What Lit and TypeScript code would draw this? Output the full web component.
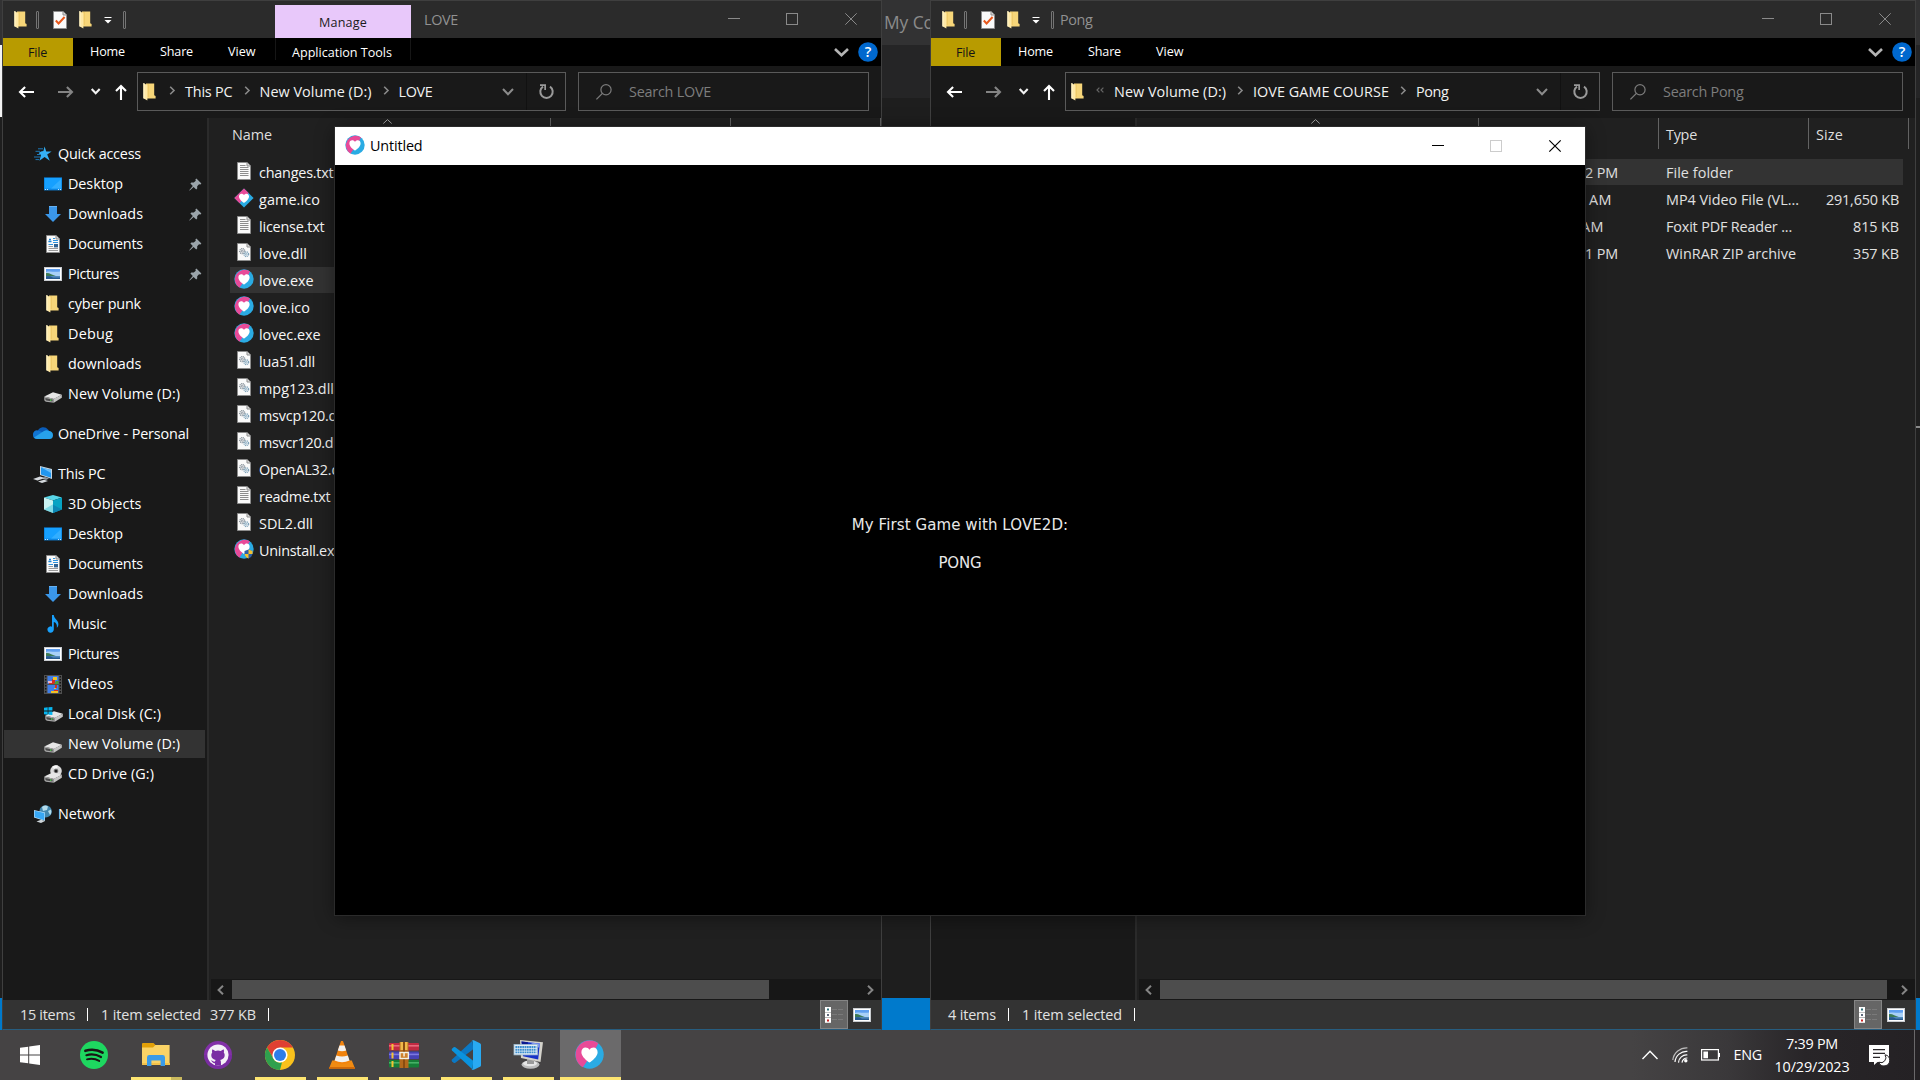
import { LitElement, html, svg, css, nothing } from "lit";
import { customElement, property } from "lit/decorators.js";

/* Text set to a known advance width by spreading the difference over its letters. */
@customElement("fit-text")
class FitText extends LitElement {
  @property() t = "";
  @property({ type: Number }) w = 0;
  static styles = css`
    :host { display: inline-block; white-space: pre; flex: none; }
  `;
  render() { return html`<span>${this.t}</span>`; }
  updated() {
    const s = this.renderRoot.querySelector("span") as HTMLElement;
    s.style.letterSpacing = "0px";
    if (!this.w) return;
    const natural = s.getBoundingClientRect().width;
    s.style.letterSpacing = `${((this.w - natural) / this.t.length).toFixed(3)}px`;
  }
}
const T = (t: string, w: number, cls = "") => html`<fit-text class=${cls} .t=${t} .w=${w}></fit-text>`;

const icon = (w: number, h: number, body: unknown, cls = "") =>
  html`<svg class="ic ${cls}" width=${w} height=${h} viewBox="0 0 ${w} ${h}">${body}</svg>`;

const heart = (cx: number, cy: number, s: number) => svg`<path fill="#fff"
  transform="translate(${cx} ${cy}) scale(${s})"
  d="M0 5.6C-1.5 4.5-5.6 1.6-5.6-1.6C-5.6-3.6-4.3-4.8-2.8-4.8C-1.6-4.8-.6-4.2 0-3.2C.6-4.2 1.6-4.8 2.8-4.8C4.3-4.8 5.6-3.6 5.6-1.6C5.6 1.6 1.5 4.5 0 5.6Z"/>`;
const loveCircle = (d: number, cls = "") => icon(d, d, svg`
  <circle cx=${d / 2} cy=${d / 2} r=${d / 2 - 0.3} fill="#2aabe3"/>
  <path fill="#e84a98" d="M${d * 0.8} ${d * 0.11}A${d / 2 - 0.2} ${d / 2 - 0.2} 0 1 0 ${d * 0.27} ${d * 0.94}L${d * 0.42} ${d * 0.72}L${d * 0.66} ${d * 0.4}Z"/>
  ${heart(d / 2, d / 2, d / 20)}`, cls);

const folder = () => icon(13, 18, svg`
  <path fill="#f7d679" d="M3 .5H11.2V12.2L12.6 13V15.4H3Z"/>
  <path fill="#e9bf5c" d="M4.5 1H6V14H4.5Z" opacity=".5"/>
  <path fill="#ffe9a6" d="M.4 0L4.4 2.2V17.6L.4 15.2Z"/>
  <path fill="#fff3c8" d="M.4 0L1.6.6V15.8L.4 15.2Z"/>`, "folder");
const page = (body: unknown) => icon(14, 18, svg`
  <path fill="#fafafa" stroke="#8c8c8c" d="M.5.5H10L13.5 4V17.5H.5Z"/>
  <path fill="#dcdcdc" stroke="#8c8c8c" d="M10 .5V4H13.5"/>${body}`);
const lines = svg`<path stroke="#8d8d8d" fill="none" d="M3 3.5H8.5M3 5.5H11.5M3 7.5H11.5M3 9.5H11.5M3 11.5H11.5M3 13.5H11.5"/>`;
const gears = svg`<g fill="none">
  <circle cx="5.3" cy="8.2" r="2.5" stroke="#7c8790" stroke-width="1.3" stroke-dasharray="1.1 .6"/>
  <circle cx="5.3" cy="8.2" r="1" stroke="#7c8790" stroke-width=".8"/>
  <circle cx="9.3" cy="11.2" r="2.3" stroke="#7fa3bb" stroke-width="1.3" stroke-dasharray="1.1 .6"/>
  <circle cx="9.3" cy="11.2" r=".9" stroke="#7fa3bb" stroke-width=".8"/></g>`;

const picture = (w = 18, h = 14) => html`<svg class="ic" width=${w} height=${h} viewBox="0 0 18 14">
  <rect width="18" height="14" fill="#c9ccd0"/><rect x="1" y="1" width="16" height="12" fill="#fff"/>
  <rect x="2" y="2" width="14" height="10" fill="#5f9ff0"/>
  <path fill="#a9d0f7" d="M2 5C6 3.5 10 5.5 16 4.5V9H2Z"/>
  <path fill="#3d7a55" d="M2 6.2C5 5.6 8 8 12.5 9.2H2Z"/>
  <path fill="#27598f" d="M2 9.2H16V12H2Z"/><path fill="#5c95c4" d="M6 9.2H16V10.4H9Z"/></svg>`;

const drive = svg`<path fill="#e6e6e6" d="M.3 6.6L9 2.2L17.8 4.8L9.8 9Z"/>
  <path fill="#a8a8a8" d="M.3 6.6L9.8 8.7V12.8L2 11.7Q.3 11.2.3 9.8Z"/>
  <path fill="#c4c4c4" d="M9.8 8.7L17.8 4.8V7.8L9.8 12.8Z"/>
  <path fill="#4a4a4a" d="M1.4 8L8.6 9.5V11.4L2.4 10.4Q1.4 10.1 1.4 9.2Z"/><circle cx="6.8" cy="10.1" r=".8" fill="#4be04b"/>`;

const ICONS: Record<string, () => unknown> = {
  folder,
  star: () => icon(18, 16, svg`
    <path fill="#35b1f5" d="M10.6.6L12.2 5.4H17.6L13.2 8.6L15.8 14.8L10.6 11L5.4 14.8L7 9L4.6 7L7 5.4L9.4 5Z"/>
    <path stroke="#1c78b8" stroke-width="1" d="M4 2.8H9M1.5 5.3H6M3 8.5H6.5M0 11H6M1.5 13.6H5"/>`),
  desktop: () => icon(18, 14, svg`<rect y=".4" width="18" height="13" fill="#0b84e0"/>
    <rect x=".8" y="1" width="16.4" height="10.6" fill="#16a0ff"/><path fill="#32aeff" d="M7 11.6L17.2 2V11.6Z"/>
    <path stroke="#bfe4ff" d="M1 12.5H2M3 12.5H4M14 12.5H15M16 12.5H17"/>`),
  down: () => icon(16, 16, svg`<path fill="#3b97ea" d="M4 0H12V8H16L8 16L0 8H4Z"/><path fill="#66b2f3" d="M4 0H12V1H4Z"/>`),
  doc: () => page(svg`<path d="M3 4.5H5M2.4 6.5H5.5" stroke="#1c86d8" stroke-width="1.6"/>
    <path d="M7 3.5H9M7 5.5H12M7 7.5H12M2.5 9.5H7" stroke="#2d93de" fill="none"/><rect x="8" y="9" width="4" height="3.4" fill="#316392"/>
    <path d="M2.5 11.5H7M2.5 13.5H12M2.5 15.5H12" stroke="#9a9a9a"/>`),
  picture: () => picture(),
  drive: () => icon(18, 11, svg`<g transform="translate(0 -1)">${drive}</g>`, "low"),
  cloud: () => icon(20, 13, svg`<path fill="#0a5cb8" d="M4.8 5A5.8 5.8 0 0 1 15 3.6L17 6L8 9Z"/>
    <path fill="#1174d2" d="M0 9A4 4 0 0 1 5.2 4.6L11 7L4 13A4 4 0 0 1 0 9Z"/>
    <path fill="#27a1ea" d="M11 5A5 5 0 0 1 16 5A4 4 0 0 1 20 9.2A3.8 3.8 0 0 1 16.5 13H4A4 4 0 0 1 1 11.6Z"/>`, "high"),
  pc: () => icon(20, 17, svg`<path fill="#c6d5e0" d="M7 0L19 3V13L7 9Z"/><path fill="#2196ee" d="M8 1.3L18 4V11.8L8 8.4Z"/>
    <path fill="#6cc0fa" d="M8 1.3L18 4V7Z"/><path fill="#8e969c" d="M12 11L16 12.5L13 14L9 12.6Z"/>
    <path fill="#d6dade" d="M0 13L7 10.6L12 12L4.5 14.4ZM5 15.6L11 13.8L15 15L9 17Z"/>`),
  cube: () => icon(18, 18, svg`<path fill="#58d6e8" d="M9 0L18 2.6L9 5.6L0 2.6Z"/><path fill="#c9f3f3" d="M0 2.6L9 5.6V18L0 14.6Z"/>
    <path fill="#07a3c4" d="M18 2.6L9 5.6V18L18 14.6Z"/><path fill="#3fc6dc" d="M0 14.6L9 9.2V18Z" opacity=".55"/><path fill="#0c87b5" d="M18 14.6L9 9.8V18Z"/>`),
  note: () => icon(12, 18, svg`<path fill="#18a0fb" d="M5 0H6.8C7 4 11.4 5 11.4 9.2C11.4 11 10.5 12.2 9.8 12.8C10.4 9 8.6 7.6 6.8 7V14.6A3.2 3.2 0 1 1 5 11.7Z"/>`),
  video: () => icon(18, 19, svg`<rect width="18" height="19" fill="#505050"/><rect x="3.5" y="1" width="11" height="8" fill="#3f7fe8"/>
    <rect x="3.5" y="10" width="11" height="8" fill="#3f7fe8"/><path fill="#d62c22" d="M8 4H11V9H5V7H8ZM11 10H13V13H11ZM10 15H14V16H10Z"/>
    <path fill="#f0c425" d="M9 2H13V5H9ZM7 16H14V18H7ZM10 13H12V14H10Z"/><path fill="#e9b4c6" d="M4 6H8V8H4Z"/><path fill="#4b9c36" d="M12 6H14.5V9H10Z"/>
    <path stroke="#161616" stroke-width="1.4" stroke-dasharray="1.5 1.5" d="M1.7 1V19M16.3 1V19"/>`),
  osdrive: () => icon(19, 15, svg`<g transform="translate(1 2)">${drive}</g><path fill="#06b6f0" d="M0 .8L3.7.3V3.6H0ZM4.4.2L8.4 0V3.6H4.4ZM0 4.4H3.7V7.7L0 7.2ZM4.4 4.4H8.4V8L4.4 7.8Z"/>`),
  cd: () => icon(18, 18, svg`<circle cx="12" cy="6" r="5.8" fill="#dadada"/><path fill="#f8f8f8" d="M12 6L8 1.8A5.8 5.8 0 0 1 14 .6Z"/>
    <circle cx="12" cy="6" r="2.4" fill="#8b8b8b"/><circle cx="12" cy="6" r="1.5" fill="#1d1d1d"/><g transform="translate(0 5)">${drive}</g>`),
  net: () => icon(18, 18, svg`<circle cx="11.6" cy="6.4" r="6.2" fill="#4288b0"/><path fill="#b4dcec" d="M8 2Q11-.5 14 1.4L13 5L9 6ZM14 6L17 4.5Q18 8 16 10Z"/>
    <path fill="#bfe3fb" d="M0 5L11 7.5V16L0 12.5Z"/><path fill="#38a8f5" d="M.6 5.8L10.4 8V15.2L.6 12Z"/><path fill="#cfd6da" d="M2.5 16.5L7 14.7L11 16L7 18Z"/>`),
  txt: () => page(lines),
  dll: () => page(gears),
  love: () => loveCircle(20),
  game: () => icon(20, 20, svg`<path fill="#2aabe3" d="M10 .4L19.6 10L10 19.6L.4 10Z" stroke-linejoin="round"/>
    <path fill="#e84a98" d="M10 .4L14.6 5L5.6 15.2L.4 10Z"/>${heart(10, 10, 0.9)}`),
  uninst: () => icon(20, 20, svg`<circle cx="10" cy="10" r="9.7" fill="#2aabe3"/>
    <path fill="#e84a98" d="M16 2.2A9.8 9.8 0 1 0 5.4 18.8L12 8Z"/>${heart(10, 9.4, 1)}
    <path fill="#2c5fa8" d="M10.5 12L14.5 10.5L18.5 12V15Q18 18 14.5 19.6Q11 18 10.5 15Z"/>
    <path fill="#f2c230" d="M14.5 10.5L18.5 12V15H14.5ZM10.6 15H14.5V19.6Q11 18 10.6 15Z"/>`),
};

type Nav = [string, string, number, number, string?];
const NAV: Nav[] = [
  ["star", "Quick access", 83, 0], ["desktop", "Desktop", 55, 1, "pin"], ["down", "Downloads", 75, 1, "pin"],
  ["doc", "Documents", 75, 1, "pin"], ["picture", "Pictures", 51, 1, "pin"], ["folder", "cyber punk", 73, 1],
  ["folder", "Debug", 45, 1], ["folder", "downloads", 73.5, 1], ["drive", "New Volume (D:)", 112, 1],
  ["cloud", "OneDrive - Personal", 131, 0, "gap"], ["pc", "This PC", 47.5, 0, "gap"], ["cube", "3D Objects", 73.5, 1],
  ["desktop", "Desktop", 55, 1], ["doc", "Documents", 75, 1], ["down", "Downloads", 75, 1], ["note", "Music", 38.5, 1],
  ["picture", "Pictures", 51, 1], ["video", "Videos", 45.5, 1], ["osdrive", "Local Disk (C:)", 93, 1],
  ["drive", "New Volume (D:)", 112, 1, "sel"], ["cd", "CD Drive (G:)", 86, 1], ["net", "Network", 57, 0, "gap"],
];
const FILES: [string, string, number][] = [
  ["txt", "changes.txt", 74.5], ["game", "game.ico", 61], ["txt", "license.txt", 65.5], ["dll", "love.dll", 48],
  ["love", "love.exe", 54.5], ["love", "love.ico", 51], ["love", "lovec.exe", 61.5], ["dll", "lua51.dll", 56],
  ["dll", "mpg123.dll", 75], ["dll", "msvcp120.dll", 85], ["dll", "msvcr120.dll", 81], ["dll", "OpenAL32.dll", 88],
  ["txt", "readme.txt", 71.5], ["dll", "SDL2.dll", 54], ["uninst", "Uninstall.exe", 83],
];
const ROWS: [string, number, number, string, number, string, number][] = [
  ["2 PM", 33, 7, "File folder", 67, "", 0],
  ["AM", 23, 13, "MP4 Video File (VL...", 133, "291,650 KB", 73],
  ["AM", 23, 21, "Foxit PDF Reader ...", 126, "815 KB", 46],
  ["1 PM", 33, 7, "WinRAR ZIP archive", 130, "357 KB", 46],
];

const captionBtns = (color: string, max = color, sw = 1) => html`
  ${icon(12, 12, svg`<path stroke=${color} d="M0 5.5H12"/>`)}
  ${icon(12, 12, svg`<rect x=".5" y=".5" width="11" height="11" fill="none" stroke=${max}/>`, "mx")}
  ${icon(12, 12, svg`<path stroke=${color} stroke-width=${sw} d="M.3.3L11.7 11.7M11.7.3L.3 11.7"/>`)}`;
const qsep = () => html`<i class="qsep"></i>`;
const crumb = () => icon(7, 9, svg`<path fill="none" stroke="#8a8a8a" stroke-width="1.6" d="M1.2.7L5 4.5L1.2 8.3"/>`, "crumb");
const pin = () => icon(13, 13, svg`<path fill="#9aa3a9" d="M7.4.6L12.4 5.4L11.4 6.4L10 6.2L8.2 8.2V10.4L7.2 11.4L4.6 9L.8 12.6L.2 12.2L3.8 8L1.4 5.6L2.4 4.6H4.8L6.8 2.8L6.4 1.6Z"/>`, "pin");
const viewIcon = () => icon(18, 16, svg`<g fill="#fff"><rect width="6" height="5"/><rect y="5.4" width="6" height="5"/><rect y="10.8" width="6" height="5"/></g>
  <path fill="#2f6f78" d="M2 1.5H4V3.5H2Z"/><path fill="#5f6a7c" d="M2 7H4V9H2Z"/><path fill="#c22" d="M2 12.4H4V14.4H2Z"/>
  <path stroke="#7a7a7a" d="M7 2.5H12M13 2.5H18M7 7.5H12M13 7.5H18M7 12.5H12M13 12.5H18"/>`);

@customElement("explorer-window")
class ExplorerWindow extends LitElement {
  @property() kind: "love" | "pong" = "love";
  static styles = css`
    :host { display: flex; flex-direction: column; box-sizing: border-box; border: 1px solid #3f3f3f; border-bottom: 1px solid #275d7f;
      background: #191919; color: #fff; font: 14.4px/20px "Open Sans", "Noto Sans", sans-serif; overflow: hidden; }
    .ic { display: block; flex: none; overflow: visible; }
    .title { height: 37px; flex: none; background: #2b2b2b; display: flex; align-items: flex-start; box-sizing: border-box; padding-left: 11px; color: #919191; }
    .quick { display: grid; grid-template-columns: 22px 17px 26px 25px 19px 3px; padding-top: 10px; align-items: center; height: 18px; }
    .qsep { display: block; width: 1px; height: 16px; border: 1px solid #757575; border-radius: 1px; }
    .manage { margin: 4px 0 0 149px; width: 136px; height: 33px; background: #e8c8fa; color: #1b1b1b; font-size: 12.6px; line-height: 35px; text-align: center; }
    .cap { margin-top: 9px; }
    .love .cap { margin-left: 13px; } .pong .cap { margin-left: 6px; }
    .btns { margin: 12px 24px 0 auto; display: flex; gap: 46px; }
    .btns .mx { margin-right: 1px; }
    .ribbon { height: 28px; flex: none; background: #000; display: flex; align-items: center; font-size: 12.6px; line-height: 30px; }
    .file { width: 70px; height: 28px; background: #b89b00; color: #141414; text-align: center; box-sizing: border-box; padding-right: 1px; }
    .tab { margin-left: 35px; } .tab.first { margin-left: 17px; }
    .tools { margin-left: 19px; width: 133px; padding-right: 1px; height: 22px; line-height: 30px; align-self: flex-start; border: solid #161616; border-width: 0 1px; text-align: center; }
    .help { margin-left: auto; margin-right: 3px; display: flex; align-items: center; gap: 9px; }
    .addr { height: 52px; flex: none; display: flex; align-items: center; box-sizing: border-box; padding: 0 12px 1px 15px; }
    .arrows { display: grid; grid-template-columns: 39px 34px 24px 22px; align-items: center; flex: none; }
    .box { height: 37px; border: 1px solid #5a5a5a; display: flex; align-items: center; flex: none; }
    .box.path { flex: 1; margin-right: 12px; padding-left: 5px; color: #f2f2f2; }
    .crumb { margin: 0 9px 2px 11px; }
    .path .ic + .crumb { margin-left: 13px; }
    .dbl { margin: 0 10px 3px 12px; }
    .drop { margin-left: auto; margin-right: 12px; }
    .refresh { border-left: 1px solid #111; height: 37px; width: 38px; display: grid; place-items: center; }
    .search { width: 289px; color: #7d7d7d; gap: 17px; }
    .search .ic { margin-left: 17px; }
    .main { flex: 1; display: flex; min-height: 0; }
    .nav { width: 204px; flex: none; padding-top: 22px; box-sizing: border-box; border-right: 2px solid #191919; display: flex; flex-direction: column; gap: 2px; }
    .row { height: 28px; flex: none; margin-left: 1px; display: flex; align-items: center; }
    .row .slot { width: 20px; display: grid; place-items: center; flex: none; margin: 0 5px 0 29px; }
    .row.sub .slot { margin-left: 39px; }
    .row .folder { margin-right: 1px; }
    .row .low { margin-top: 5px; } .row .high { margin-bottom: 3px; }
    .row.gap { margin-top: 10px; }
    .row.sel { background: #333; }
    .row fit-text { margin-top: -1px; }
    .pin { margin-left: auto; margin-right: 3px; }
    .content { flex: 1; border-left: 2px solid #2b2b2b; background: #202020; display: flex; flex-direction: column; min-width: 0; }
    .head { height: 31px; flex: none; display: flex; color: #dedede; line-height: 33px; box-sizing: border-box; }
    .head div { border-right: 1px solid #636363; box-sizing: border-box; flex: none; height: 31px; padding-left: 7px; }
    .head .name { width: 342px; padding-left: 23px; display: flex; }
    .sort { margin: 1px 0 0 111px; }
    .c2 { width: 180px; } .c3 { width: 150px; } .c4 { width: 100px; }
    .list { flex: 1; padding-top: 10px; }
    .frow { height: 26px; margin: 0 11px 1px 21px; display: flex; align-items: center; color: #f6f6f6; }
    .frow.sel, .prow.sel { background: #333; }
    .frow fit-text, .prow fit-text { position: relative; top: 1px; }
    .frow .slot { width: 20px; margin: -3px 5px 0 4px; display: grid; place-items: center; flex: none; }
    .prow { height: 26px; margin: 0 12px 1px 21px; display: flex; align-items: center; color: #e0e0e0; }
    .prow .size { margin-left: auto; margin-right: 4px; }
    .dates { display: flex; justify-content: flex-end; width: 508px; flex: none; }
    .e7 { margin-right: 48px; } .e13 { margin-right: 54px; } .e21 { margin-right: 62px; }
    .scroll { height: 21px; margin-left: 2px; background: #171717; display: flex; align-items: center; flex: none; }
    .scroll .l { margin: 0 8px 0 6px; } .scroll .r { margin: 0 7px 0 auto; }
    .thumb { height: 19px; background: #4d4d4d; }
    .love .thumb { width: 537px; } .pong .thumb { width: 727px; }
    .status { height: 29px; flex: none; background: #333; display: flex; align-items: center; color: #e2e2e2; padding-left: 17px; }
    .status i { width: 1px; height: 13px; background: #fff; margin: 0 13px 0 12px; }
    .status .kb { margin-left: 9px; }
    .views { margin-left: auto; display: flex; align-items: center; gap: 5px; margin-right: 10px; }
    .vbtn { width: 26px; height: 27px; background: #666; border: 1px solid #858585; display: grid; place-items: center; }
    .wrap { display: contents; }
  `;
  render() {
    const love = this.kind === "love";
    return html`<div class="wrap ${this.kind}">
      <div class="title">
        <div class="quick">${folder()}${qsep()}
          ${page(svg`<path fill="none" stroke="#e8581c" stroke-width="2" d="M2.8 9.5L5.6 12.5L11.6 6"/>`)}
          ${folder()}
          ${icon(8, 7, svg`<path stroke="#fff" d="M.5 .5H7.5"/><path fill="#fff" d="M.5 3H7.5L4 6.6Z"/>`)}${qsep()}</div>
        ${love ? html`<div class="manage">${T("Manage", 48)}</div>` : nothing}
        ${T(love ? "LOVE" : "Pong", love ? 34 : 32.5, "cap")}
        <div class="btns">${captionBtns("#8a8a8a")}</div>
      </div>
      <div class="ribbon">
        <div class="file">${T("File", 19)}</div>
        ${T("Home", 35, "tab first")}${T("Share", 33, "tab")}${T("View", 27.5, "tab")}
        ${love ? html`<div class="tools">${T("Application Tools", 100)}</div>` : nothing}
        <div class="help">
          ${icon(15, 9, svg`<path fill="none" stroke="#b4b4b4" stroke-width="2.6" d="M1 1L7.5 7.3L14 1"/>`)}
          <svg class="ic" width="20" height="20" viewBox="0 0 20 20"><circle cx="10" cy="10" r="9.8" fill="#0068ce"/>
            <text x="10" y="15.2" fill="#fff" font-size="14.5" font-weight="600" text-anchor="middle">?</text></svg>
        </div>
      </div>
      <div class="addr">
        <div class="arrows">
          ${icon(16, 12, svg`<path fill="none" stroke="#fff" stroke-width="2.1" d="M16 6H2M7.1 1L2 6L7.1 11"/>`)}
          ${icon(16, 12, svg`<path fill="none" stroke="#848484" stroke-width="2.1" d="M1 6H15M9.9 1L15 6L9.9 11"/>`)}
          ${icon(10, 7, svg`<path fill="none" stroke="#f2f2f2" stroke-width="2.1" d="M.7 1L4.7 5.2L8.7 1"/>`)}
          <svg class="ic" width="12" height="18" viewBox="0 0 12 14"><path fill="none" stroke="#fff" stroke-width="2.1" d="M6 15V.8M1 6L6 .9L11 6"/></svg>
        </div>
        <div class="box path">${folder()}
          ${love ? html`${crumb()}${T("This PC", 47.5)}${crumb()}${T("New Volume (D:)", 112)}${crumb()}${T("LOVE", 34)}`
            : html`${icon(8, 6, svg`<path fill="none" stroke="#666" stroke-width="1.2" d="M3.4.6L1 3L3.4 5.4M7.4.6L5 3L7.4 5.4"/>`, "dbl")}
              ${T("New Volume (D:)", 112)}${crumb()}${T("IOVE GAME COURSE", 136)}${crumb()}${T("Pong", 32.5)}`}
          ${icon(12, 8, svg`<path fill="none" stroke="#8c8c8c" stroke-width="2" d="M1 1L6 6.2L11 1"/>`, "drop")}
          <div class="refresh">${icon(15, 15, svg`<path fill="none" stroke="#9a9a9a" stroke-width="2" d="M11 2.6A6.2 6.2 0 1 1 4 2.6"/><path fill="#9a9a9a" d="M1 .2H7V6H5.3V2H1Z"/>`)}</div>
        </div>
        <div class="box search">
          ${icon(16, 16, svg`<circle cx="10" cy="5.8" r="5.1" fill="none" stroke="#7c7c7c" stroke-width="1.2"/><path stroke="#7c7c7c" stroke-width="1.3" d="M6.4 9.4L.4 15.4"/>`)}
          ${T(love ? "Search LOVE" : "Search Pong", love ? 82 : 80.5)}
        </div>
      </div>
      <div class="main">
        <div class="nav">${love ? NAV.map(([ic, t, w, sub, x]) => html`
          <div class="row ${sub ? "sub" : ""} ${x === "gap" ? "gap" : ""} ${x === "sel" ? "sel" : ""}">
            <span class="slot">${ICONS[ic]()}</span>${T(t, w)}${x === "pin" ? pin() : nothing}</div>`) : nothing}</div>
        <div class="content">
          <div class="head">
            <div class="name">${T("Name", 40)}${icon(9, 5, svg`<path fill="none" stroke="#a6a6a6" d="M.3 4.5L4.5.6L8.7 4.5"/>`, "sort")}</div>
            <div class="c2"></div><div class="c3">${love ? nothing : T("Type", 31)}</div>
            ${love ? nothing : html`<div class="c4">${T("Size", 27)}</div>`}
          </div>
          <div class="list">
            ${love ? FILES.map(([ic, t, w], i) => html`<div class="frow ${i === 4 ? "sel" : ""}"><span class="slot">${ICONS[ic]()}</span>${T(t, w)}</div>`)
              : ROWS.map(([d, dw, off, t, tw, s, sw], i) => html`<div class="prow ${i === 0 ? "sel" : ""}">
                <span class="dates">${T(d, dw, "e" + off)}</span>${T(t, tw)}${s ? T(s, sw, "size") : nothing}</div>`)}
          </div>
          <div class="scroll">
            ${icon(7, 10, svg`<path fill="none" stroke="#858585" stroke-width="2" d="M6 .8L1.6 5L6 9.2"/>`, "l")}
            <div class="thumb"></div>
            ${icon(7, 10, svg`<path fill="none" stroke="#858585" stroke-width="2" d="M1 .8L5.4 5L1 9.2"/>`, "r")}
          </div>
        </div>
      </div>
      <div class="status">
        ${love ? T("15 items", 55) : T("4 items", 48)}<i></i>${T("1 item selected", 100)}
        ${love ? T("377 KB", 46, "kb") : nothing}<i></i>
        <div class="views"><div class="vbtn">${viewIcon()}</div>${picture()}</div>
      </div>
    </div>`;
  }
}

const TASKS: { run: number; cls?: string; ic: () => unknown }[] = [
  { run: 0, ic: () => icon(20, 20, svg`<path fill="#fff" d="M0 2.8L8.2 1.7V9.5H0ZM9.2 1.5L20 0V9.5H9.2ZM0 10.5H8.2V18.3L0 17.2ZM9.2 10.5H20V20L9.2 18.5Z"/>`) },
  { run: 0, ic: () => icon(28, 28, svg`<circle cx="14" cy="14" r="14" fill="#1ed760"/>
    <path fill="none" stroke="#191414" stroke-linecap="round" stroke-width="2.6" d="M5.4 9.8C11 8.2 17.6 8.8 22.6 11.6"/>
    <path fill="none" stroke="#191414" stroke-linecap="round" stroke-width="2.2" d="M6.4 14.2C11 12.9 16.6 13.5 21 16"/>
    <path fill="none" stroke="#191414" stroke-linecap="round" stroke-width="1.9" d="M7 18.3C11 17.3 15.6 17.8 19.2 19.9"/>`) },
  { run: 2, ic: () => icon(28, 24, svg`<path fill="#e2a008" d="M0 .8Q0 0 1 0H11.5L14 2.4V5H0Z"/><path fill="#fad366" d="M0 4.6H11L13.4 2H27.6V22H0Z"/>
    <path fill="#f3c24a" d="M0 20H28V22H0Z"/><path fill="#3a9be8" d="M5 14.4Q5 12 7.4 12H20.6Q23 12 23 14.4V23H18.6V17.4H9.4V23H5Z"/>`) },
  { run: 0, ic: () => icon(28, 28, svg`<circle cx="14" cy="14" r="14" fill="#8230a8"/><path fill="#6f2a9c" d="M0 14A14 14 0 0 0 28 14Z" opacity=".5"/><circle cx="14" cy="14" r="10.6" fill="#f4f1f7"/>
    <path fill="#7a2da4" d="M8.4 8.2L11.3 9.9Q14 9.3 16.7 9.9L19.6 8.2Q20.4 10 19.8 11.6C21.6 14 20.8 18.4 16.2 19C17 20 17 21 17 24.6H11V22.2C8.4 22.7 8.4 20.4 6.8 19.6C8.8 19.2 9 21 11 20.6Q11 19.6 11.8 19C7.2 18.4 6.4 14 8.2 11.6Q7.6 10 8.4 8.2Z"/>`) },
  { run: 1, ic: () => icon(30, 30, svg`<circle cx="15" cy="15" r="15" fill="#f9c11c"/>
    <path fill="#df4032" d="M2 7.5A15 15 0 0 1 28 7.5H15L8.5 18.7Z"/><path fill="#2fa04e" d="M2 7.5L8.5 18.8A7.5 7.5 0 0 0 17 22.3L15 30A15 15 0 0 1 2 7.5Z"/>
    <circle cx="15" cy="15" r="7.6" fill="#fff"/><circle cx="15" cy="15" r="6" fill="#2f7de9"/>`) },
  { run: 1, ic: () => icon(28, 29, svg`<path fill="#f08b13" d="M4.2 20.5H23.8L27 28.4H1Z"/><path fill="#d26a08" d="M1 27H27V28.8H1Z"/>
    <path fill="#f2830c" d="M13 1H15L22 22Q14 26 6 22Z"/><path fill="#f1f1f1" d="M11.5 5.5H16.5L18.2 10.4Q14 12 9.8 10.4ZM8.3 15.4Q14 17.5 19.8 15.4L21.5 20.6Q14 24 6.6 20.6Z"/>`) },
  { run: 1, ic: () => icon(30, 26, svg`<rect y="1" width="30" height="7.5" rx="1" fill="#c22a42"/><rect y="3" width="30" height="1.6" fill="#e86a7c"/>
    <rect y="9.6" width="30" height="7.4" rx="1" fill="#4642b4"/><rect y="11.6" width="30" height="1.6" fill="#7d79e0"/>
    <rect y="18" width="30" height="7.6" rx="1" fill="#167f38"/><rect y="20" width="30" height="1.6" fill="#46b066"/>
    <path fill="#f4c233" d="M2.5 2H4.5V8H2.5ZM2.5 10.5H4.5V16.5H2.5ZM2.5 19H4.5V25H2.5Z"/>
    <rect x="10.5" width="9" height="26" fill="#b3691c"/><rect x="11.5" width="7" height="8" fill="#efb94a"/><rect x="14" width="2" height="26" fill="#8a4d10"/>
    <rect x="11" y="10.5" width="8.4" height="6" fill="#d0812c" stroke="#f1f1e4" stroke-width="1.4"/><rect x="14.3" y="10" width="1.5" height="4.5" fill="#f1f1e4"/>`) },
  { run: 1, ic: () => icon(30, 30, svg`<path fill="#0b78c4" d="M21.6.6L1 19.4Q.2 20.3 1 21.2L2.6 22.7Q3.4 23.3 4.3 22.7L22.2 9.2Z"/>
    <path fill="#0a93de" d="M21.6 29.4L1 10.6Q.2 9.7 1 8.8L2.6 7.3Q3.4 6.7 4.3 7.3L22.2 20.8Z"/>
    <path fill="#29aaf2" d="M21.4.4Q22 0 22.8.3L29 3.2Q30 3.8 30 4.8V25.2Q30 26.2 29 26.8L22.8 29.7Q21.4 30.2 20.4 29.2Q22 29.6 22 27.8V2.2Q22 .4 20.4.8Z"/>`) },
  { run: 1, ic: () => icon(29, 29, svg`<ellipse cx="16.5" cy="24.6" rx="9" ry="4.2" fill="#bcbcbc"/><ellipse cx="16" cy="23.4" rx="7" ry="2.8" fill="#e6e6e6"/><path fill="#9a9a9a" d="M13 19H20V24H13Z"/>
    <path fill="#d4d2cb" d="M6 0L29 2.2L26.5 22L7 18Z"/><path fill="#1632c8" d="M7.5 1.6L25.8 3.6L24.2 19.4L9 16.2Z"/><path fill="#0b1a8e" d="M7.5 1.6L14 2.3L13.6 4.5L8 4.4Z"/>
    <path fill="#7d96f2" d="M16 2.6L25.8 3.6L25.4 8Z"/>
    <rect y="4.5" width="23.4" height="10.4" fill="#e4eef5" stroke="#9dbbd0" stroke-width=".8"/>
    <path stroke="#3c8fd0" stroke-width="1.9" stroke-dasharray="1.8 .5" d="M1.4 7H22.4M1.4 9.7H22.4M1.4 12.4H22.4"/>`) },
  { run: 1, cls: "on", ic: () => loveCircle(29) },
];

@customElement("app-root")
class AppRoot extends LitElement {
  static styles = css`
    :host { display: block; width: 1920px; height: 1080px; position: relative; overflow: hidden; background: #1e1e1e;
      font: 14.4px/20px "Open Sans", "Noto Sans", sans-serif; color: #fff; }
    .ic { display: block; flex: none; overflow: visible; }
    .desk { height: 1030px; display: flex; flex-direction: column; }
    .vt { height: 45px; background: #323233; color: #8b8b8b; font-size: 17.4px; line-height: 44px; padding-left: 884px; }
    .vm { height: 53px; background: #252526; }
    .vb { flex: 1; }
    .vs { height: 32px; background: #007acc; }
    .edge { position: absolute; left: 0; top: 45px; width: 2px; height: 72px; background: #f3f3f3; }
    .tick { position: absolute; left: 1916px; top: 426px; width: 4px; height: 2px; background: #8a8a8a; }
    .w1 { position: absolute; left: 2px; top: 0; width: 880px; height: 1030px; }
    .w2 { position: absolute; left: 930px; top: 0; width: 986px; height: 1030px; }
    .w3 { position: absolute; left: 335px; top: 127px; width: 1250px; height: 788px; display: flex; flex-direction: column;
      box-shadow: 0 0 0 1px #2b2b2b, 0 2px 18px rgba(0,0,0,.45); background: #000; }
    .wt { height: 38px; background: #fff; color: #000; display: flex; align-items: center; padding-left: 10px; box-sizing: border-box; }
    .wt .ic.logo { margin: 0 5px 3px 0; }
    .wt .btns { margin: 0 24px 0 auto; display: flex; gap: 46px; }
    .wt .mx { margin-right: 1px; }
    .game { flex: 1; display: flex; flex-direction: column; align-items: center; color: #e8e8e8; font: 15px/20px "DejaVu Sans", sans-serif; padding-top: 350px; box-sizing: border-box; gap: 18px; }
    .task { height: 50px; display: flex; background: linear-gradient(90deg, #454344 0, #454344 85%, #3a383a 90%, #282528 94%, #242124 100%); }
    .tb { width: 51px; margin-right: 11px; height: 50px; display: grid; place-items: center; box-sizing: border-box; padding: 0 1px 1px 0; }
    .tb.first { width: 60px; margin-right: 9px; padding: 0; }
    .tb.run { box-shadow: inset 0 -3px #fde571; }
    .tb.multi { background: linear-gradient(#fde571, #fde571) 0 47px / 40px 3px no-repeat, linear-gradient(#cab95e, #cab95e) 40px 47px / 11px 3px no-repeat; }
    .tb.on { width: 61px; background: #6b6a6b; margin-left: -5px; padding-right: 2px; }
    .tray { margin-left: auto; display: flex; align-items: center; color: #fff; }
    .clock { width: 76px; margin: -1px 19px 0 12px; display: flex; flex-direction: column; align-items: center; line-height: 23px; }
    .eng { margin-left: 14px; }
    .show { width: 1px; height: 50px; background: #6a686a; margin: 0 5px 0 25px; }
    .wifi { margin-left: 14px; } .bat { margin-left: 13px; }
  `;
  render() {
    return html`
      <div class="desk">
        <div class="vt">${T("My Co", 50)}</div><div class="vm"></div><div class="vb"></div><div class="vs"></div>
      </div>
      <div class="edge"></div><div class="tick"></div>
      <explorer-window class="w1" .kind=${"love"}></explorer-window>
      <explorer-window class="w2" .kind=${"pong"}></explorer-window>
      <div class="w3">
        <div class="wt">${loveCircle(20, "logo")}${T("Untitled", 52.5)}<div class="btns">${captionBtns("#000", "#ccc", 1.2)}</div></div>
        <div class="game">${T("My First Game with LOVE2D:", 216.5)}${T("PONG", 43)}</div>
      </div>
      <div class="task">
        ${TASKS.map((t, i) => html`<div class="tb ${i === 0 ? "first" : ""} ${t.run === 1 ? "run" : ""} ${t.run === 2 ? "multi" : ""} ${t.cls ?? ""}">${t.ic()}</div>`)}
        <div class="tray">
          ${icon(16, 10, svg`<path fill="none" stroke="#fff" stroke-width="1.4" d="M.5 9L8 1.2L15.5 9"/>`)}
          ${icon(16, 16, svg`<g fill="none" stroke="#fff" stroke-width="1.2"><path d="M.8 13A14 14 0 0 1 15.4.8" opacity=".65"/><path d="M3 15A11.5 11.5 0 0 1 15.4 4.4"/><path d="M6.5 15.6A8 8 0 0 1 15.4 8"/><path d="M10 15.6A5 5 0 0 1 15.4 11"/></g><circle cx="13.8" cy="13.8" r="1.7" fill="#fff"/>`, "wifi")}
          ${icon(19, 12, svg`<rect x=".6" y=".6" width="16.8" height="10.4" fill="none" stroke="#fff" stroke-width="1.2"/><path fill="#fff" d="M2.4 2.4H7V9.2H2.4ZM17.6 4H19V8H17.6Z"/>`, "bat")}
          ${T("ENG", 28.5, "eng")}
          <div class="clock">${T("7:39 PM", 52)}${T("10/29/2023", 75)}</div>
          ${icon(20, 20, svg`<path fill="#fff" d="M0 0H20V17H8.5V17L5 20V17H0Z"/><path stroke="#2a272a" stroke-width="1.3" d="M4 4.6H16M4 8.4H16M4 12.4H11"/>
            <path fill="#fff" stroke="#2a272a" stroke-width="1" d="M16 9.8A5 5 0 0 1 9.8 17.2A5.6 5.6 0 1 0 16 9.8Z"/>`)}
          <div class="show"></div>
        </div>
      </div>`;
  }
}
